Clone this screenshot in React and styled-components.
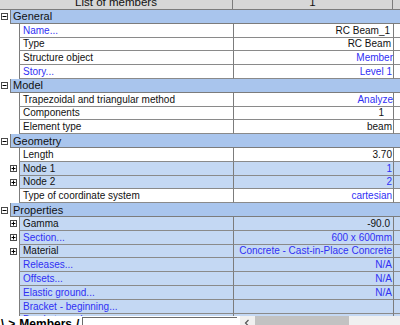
import styled, { createGlobalStyle } from "styled-components";

const GlobalStyle = createGlobalStyle`
  html, body {
    margin: 0;
    padding: 0;
    background: #fff;
    overflow: hidden;
  }
  body {
    font-family: "Liberation Sans", Arial, sans-serif;
  }
`;

const Page = styled.div`
  width: 400px;
  height: 325px;
  overflow: hidden;
  background: #fff;
`;

const HeaderBar = styled.div`
  display: grid;
  grid-template-columns: 233px 160px 1fr;
  height: 20px;
  margin-top: -10px;
  box-sizing: border-box;
  background: #d7d7d7;
  border-bottom: 1px solid #7c7c7c;
`;

const HeaderCell = styled.div`
  display: flex;
  align-items: flex-end;
  justify-content: center;
  padding-bottom: 0;
  font-size: 11.5px;
  line-height: 13px;
  color: #111;
  border-right: ${(p) => (p.$last ? "none" : "1px solid #7c7c7c")};
`;

const Tree = styled.div`
  height: 306px;
  overflow: hidden;
`;

const Row = styled.div`
  display: flex;
  height: 13.8px;
`;

const Gutter = styled.div`
  width: ${(p) => p.$w}px;
  flex-shrink: 0;
  display: flex;
  align-items: center;
  justify-content: ${(p) => (p.$end ? "flex-end" : "flex-start")};
  padding: ${(p) => (p.$end ? "0 2px 0 0" : "0 0 0 1px")};
  box-sizing: border-box;
`;

const GroupTitle = styled.div`
  flex: 1;
  display: flex;
  align-items: center;
  padding-left: 2px;
  box-sizing: border-box;
  background: #a9c5ed;
  border-left: 1px solid #7c7c7c;
  border-bottom: 1px solid #7c7c7c;
  font-size: 11px;
  color: #111;
`;

const Cell = styled.div`
  display: flex;
  align-items: center;
  box-sizing: border-box;
  width: ${(p) => (p.$w ? `${p.$w}px` : "auto")};
  flex: ${(p) => (p.$w ? "none" : "1")};
  justify-content: ${(p) => (p.$right ? "flex-end" : "flex-start")};
  padding: 0 ${(p) => p.$pr ?? 0}px 0 ${(p) => p.$pl ?? 0}px;
  background: ${(p) => (p.$blue ? "#c4d8f3" : "#fff")};
  border-left: 1px solid #7c7c7c;
  border-bottom: 1px solid #8a8a8a;
  font-size: 10px;
  white-space: nowrap;
  overflow: hidden;
  color: ${(p) => (p.$link ? "#3030f4" : "#111")};
`;

const BottomBar = styled.div`
  display: flex;
  height: 20px;
  background: #fff;
`;

const SheetNav = styled.div`
  width: 82px;
  flex-shrink: 0;
  display: flex;
  align-items: flex-start;
  gap: 4px;
  padding-left: 1px;
  box-sizing: border-box;
  font-size: 12px;
  font-weight: bold;
  line-height: 16px;
  color: #000;
  white-space: nowrap;
  overflow: hidden;
`;

const NavArrow = styled.span`
  color: #000;
`;

const TabField = styled.div`
  width: 155px;
  flex-shrink: 0;
  box-sizing: border-box;
  margin-top: 1px;
  background: #fff;
  border-top: 1px solid #6c6c6c;
  border-left: 1px solid #6c6c6c;
`;

const ScrollBar = styled.div`
  flex: 1;
  display: flex;
  background: #f0f0f0;
  margin-left: 3px;
`;

const ScrollButton = styled.div`
  width: 13px;
  display: flex;
  align-items: flex-start;
  justify-content: center;
  padding-top: 3px;
`;

const Track = styled.div`
  flex: 1;
  padding-left: 2px;
`;

const Thumb = styled.div`
  width: 94px;
  height: 100%;
  background: #c2c2c2;
`;

const Toggle = ({ open }) => (
  <svg width="7" height="7" viewBox="0 0 7 7">
    <rect x="0.5" y="0.5" width="6" height="6" fill="#fff" stroke="#4a4a4a" />
    <line x1="1.5" y1="3.5" x2="5.5" y2="3.5" stroke="#000" />
    {!open && <line x1="3.5" y1="1.5" x2="3.5" y2="5.5" stroke="#000" />}
  </svg>
);

const groups = [
  {
    title: "General",
    rows: [
      { name: "Name...", link: true, value: "RC Beam_1", pr: 3 },
      { name: "Type", value: "RC Beam", pr: 2 },
      { name: "Structure object", value: "Member", valueLink: true, pr: 0 },
      { name: "Story...", link: true, value: "Level 1", valueLink: true },
    ],
  },
  {
    title: "Model",
    rows: [
      { name: "Trapezoidal and triangular method", value: "Analyze", valueLink: true, pr: 0 },
      { name: "Components", value: "1", pr: 9 },
      { name: "Element type", value: "beam" },
    ],
  },
  {
    title: "Geometry",
    rows: [
      { name: "Length", value: "3.70" },
      { name: "Node 1", value: "1", valueLink: true, plus: true, blue: true },
      { name: "Node 2", value: "2", valueLink: true, plus: true, blue: true },
      { name: "Type of coordinate system", value: "cartesian", valueLink: true },
    ],
  },
  {
    title: "Properties",
    rows: [
      { name: "Gamma", value: "-90.0", plus: true, blue: true, pr: 3 },
      { name: "Section...", link: true, value: "600 x 600mm", valueLink: true, plus: true, blue: true },
      { name: "Material", value: "Concrete - Cast-in-Place Concrete", valueLink: true, plus: true, blue: true },
      { name: "Releases...", link: true, value: "N/A", valueLink: true, blue: true },
      { name: "Offsets...", link: true, value: "N/A", valueLink: true, blue: true },
      { name: "Elastic ground...", link: true, value: "N/A", valueLink: true, blue: true },
      { name: "Bracket - beginning...", link: true, value: "", blue: true },
      { name: "Bracket - end...", link: true, value: "", blue: true },
    ],
  },
];

const App = () => {
  return (
    <>
      <GlobalStyle />
      <Page>
        <HeaderBar>
          <HeaderCell>List of members</HeaderCell>
          <HeaderCell>1</HeaderCell>
          <HeaderCell $last />
        </HeaderBar>
        <Tree>
          {groups.map((g) => (
            <div key={g.title}>
              <Row>
                <Gutter $w={10}>
                  <Toggle open />
                </Gutter>
                <GroupTitle>{g.title}</GroupTitle>
              </Row>
              {g.rows.map((r) => (
                <Row key={r.name}>
                  <Gutter $w={19} $end>
                    {r.plus && <Toggle />}
                  </Gutter>
                  <Cell $w={214} $pl={3} $blue={r.blue} $link={r.link}>
                    {r.name}
                  </Cell>
                  <Cell $w={160} $right $pr={r.pr ?? 1} $blue={r.blue} $link={r.valueLink}>
                    {r.value}
                  </Cell>
                  <Cell $blue={r.blue} />
                </Row>
              ))}
            </div>
          ))}
        </Tree>
        <BottomBar>
          <SheetNav>
            <NavArrow>\</NavArrow>
            <NavArrow>&gt;</NavArrow>
            <span>Members</span>
            <span>/</span>
          </SheetNav>
          <TabField />
          <ScrollBar>
            <ScrollButton>
              <svg width="6" height="8" viewBox="0 0 6 8">
                <path d="M4.5 1 L1.5 4 L4.5 7" fill="none" stroke="#555" strokeWidth="1.2" />
              </svg>
            </ScrollButton>
            <Track>
              <Thumb />
            </Track>
          </ScrollBar>
        </BottomBar>
      </Page>
    </>
  );
};

export default App;
